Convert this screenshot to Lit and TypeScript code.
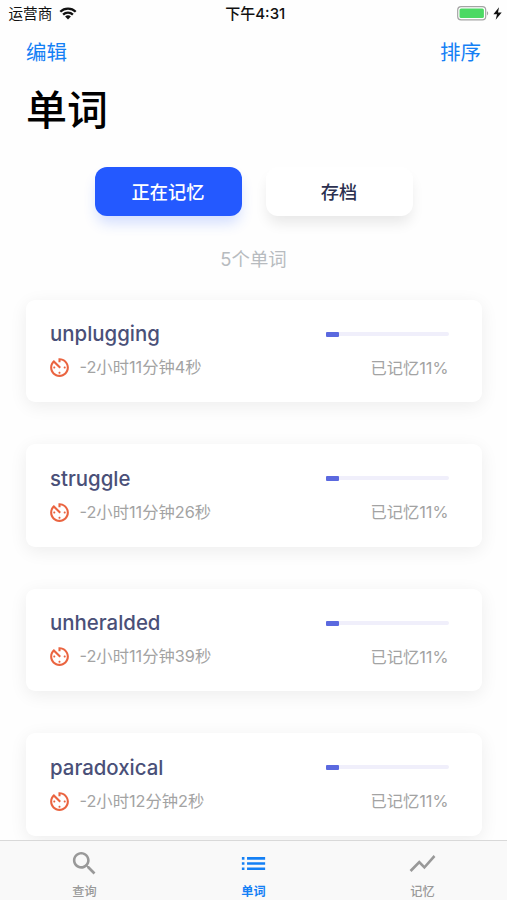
import { LitElement, html, css, svg } from "lit";
import { customElement, property } from "lit/decorators.js";
import { classMap } from "lit/directives/class-map.js";

interface Word {
  text: string;
  due: string;
  progress: number;
}

const WORDS: Word[] = [
  { text: "unplugging", due: "-2小时11分钟4秒", progress: 11 },
  { text: "struggle", due: "-2小时11分钟26秒", progress: 11 },
  { text: "unheralded", due: "-2小时11分钟39秒", progress: 11 },
  { text: "paradoxical", due: "-2小时12分钟2秒", progress: 11 },
];

const ICONS = {
  timer:
    "M11 17c0 .55.45 1 1 1s1-.45 1-1-.45-1-1-1-1 .45-1 1zm0-14v4h2V5.08c3.39.49 6 3.39 6 6.92 0 3.87-3.13 7-7 7s-7-3.13-7-7c0-1.68.59-3.22 1.58-4.42L12 13l1.41-1.41-6.8-6.8v.02C4.42 6.45 3 9.05 3 12c0 4.97 4.02 9 9 9 4.97 0 9-4.03 9-9s-4.03-9-9-9h-1zm7 9c0-.55-.45-1-1-1s-1 .45-1 1 .45 1 1 1 1-.45 1-1zM6 12c0 .55.45 1 1 1s1-.45 1-1-.45-1-1-1-1 .45-1 1z",
  search:
    "M15.5 14h-.79l-.28-.27C15.41 12.59 16 11.11 16 9.5 16 5.91 13.09 3 9.5 3S3 5.91 3 9.5 5.91 16 9.5 16c1.61 0 3.09-.59 4.23-1.57l.27.28v.79l5 4.99L20.49 19l-4.99-5zm-6 0C7.01 14 5 11.99 5 9.5S7.01 5 9.5 5 14 7.01 14 9.5 11.99 14 9.5 14z",
  list: "M3 13h2v-2H3v2zm0 4h2v-2H3v2zm0-8h2V7H3v2zm4 4h14v-2H7v2zm0 4h14v-2H7v2zM7 7v2h14V7H7z",
  chart: "M3.5 18.49l6-6.01 4 4L22 6.92l-1.41-1.41-7.09 7.97-4-4L2 16.99z",
};

const icon = (d: string) => html`<svg viewBox="0 0 24 24">${svg`<path d=${d} fill="currentColor"></path>`}</svg>`;

@customElement("status-bar")
class StatusBar extends LitElement {
  static styles = css`
    :host {
      display: grid;
      grid-template-columns: 1fr auto 1fr;
      align-items: center;
      height: 28px;
      padding: 0 5px 0 8.5px;
      color: #111;
      font-size: 14.6px;
      line-height: 28px;
    }
    .carrier, .power { display: flex; align-items: center; }
    .carrier { gap: 7px; }
    .carrier svg { margin-top: -2px; }
    .power { justify-content: flex-end; gap: 4px; margin-top: -2px; }
    .time { font-weight: 500; font-size: 15px; }
    svg { display: block; }
  `;
  render() {
    return html`
      <div class="carrier">
        <span>运营商</span>
        <svg width="18" height="13" viewBox="0 0 18 13" fill="none" stroke="#111" stroke-width="2.3">
          <path d="M1.3 4.7a11 11 0 0 1 15.4 0"></path>
          <path d="M4.1 7.6a7 7 0 0 1 9.8 0"></path>
          <path d="M9 12.6L6.1 9.6a4.2 4.2 0 0 1 5.8 0z" fill="#111" stroke="none"></path>
        </svg>
      </div>
      <span class="time">下午4:31</span>
      <div class="power">
        <svg width="32" height="15" viewBox="0 0 32 15">
          <rect x="0.7" y="0.7" width="28" height="13.2" rx="3.4" fill="#fff" stroke="#a4a4a4" stroke-width="1.2"></rect>
          <rect x="2.5" y="2.5" width="24.4" height="9.6" rx="1.6" fill="#4cd964"></rect>
          <path d="M30 5.2c1.6.6 1.6 3.6 0 4.2z" fill="#a4a4a4"></path>
        </svg>
        <svg width="9" height="13" viewBox="0 0 9 13"><path d="M6 .3L.4 7.3H4L2.7 12.7L8.7 5.5H5z" fill="#111"></path></svg>
      </div>
    `;
  }
}

@customElement("word-card")
class WordCard extends LitElement {
  @property({ attribute: false }) word!: Word;
  static styles = css`
    :host {
      box-sizing: border-box;
      display: flex;
      justify-content: space-between;
      height: 102.5px;
      padding: 20.5px 33.5px 0 24px;
      border-radius: 9px;
      background: #fff;
      box-shadow: 0 4px 18px rgba(0, 0, 0, 0.07);
    }
    .name {
      height: 28px;
      line-height: 28px;
      font-size: 20.4px;
      font-weight: 500;
      color: #4a5078;
    }
    .due { display: flex; align-items: center; gap: 7.5px; }
    .due, .ratio {
      height: 24px;
      margin-top: 7.5px;
      line-height: 25px;
      font-size: 16.3px;
      color: #a3a3a3;
      white-space: nowrap;
    }
    .due svg { width: 25px; height: 25px; margin-left: -3px; color: #ea6440; }
    .side { display: flex; flex-direction: column; width: 123px; text-align: right; }
    .track {
      height: 4px;
      margin: 11.5px 0 12.5px;
      border-radius: 2px;
      background: #f0effb;
    }
    .fill { height: 5px; border-radius: 1px; background: #5b69df; }
  `;
  render() {
    const { text, due, progress } = this.word;
    return html`
      <div>
        <div class="name">${text}</div>
        <div class="due">${icon(ICONS.timer)}<span>${due}</span></div>
      </div>
      <div class="side">
        <div class="track"><div class="fill" style="width:${progress}%"></div></div>
        <div class="ratio">已记忆${progress}%</div>
      </div>
    `;
  }
}

@customElement("tab-bar")
class TabBar extends LitElement {
  static styles = css`
    :host {
      box-sizing: border-box;
      position: relative;
      display: grid;
      grid-template-columns: repeat(3, 1fr);
      height: 60px;
      border-top: 1px solid #d9d9d9;
      background: #f9f9f9;
    }
    .tab {
      display: flex;
      flex-direction: column;
      align-items: center;
      padding-top: 6.5px;
      color: #999;
      font-size: 12.2px;
      font-weight: 500;
      line-height: 18px;
    }
    .tab.active { color: #1480f5; font-weight: 700; }
    svg { width: 31px; height: 31px; margin-bottom: 4px; }
  `;
  render() {
    const tabs = [
      { label: "查询", d: ICONS.search, active: false },
      { label: "单词", d: ICONS.list, active: true },
      { label: "记忆", d: ICONS.chart, active: false },
    ];
    return tabs.map(
      (t) => html`<div class=${classMap({ tab: true, active: t.active })}>${icon(t.d)}<span>${t.label}</span></div>`
    );
  }
}

@customElement("app-root")
class AppRoot extends LitElement {
  static styles = css`
    :host {
      display: flex;
      flex-direction: column;
      height: 900px;
      overflow: hidden;
      background: #fefefe;
      font-family: Inter, "Noto Sans CJK SC", sans-serif;
    }
    .nav {
      display: flex;
      justify-content: space-between;
      height: 48px;
      padding: 0 26px;
      line-height: 49px;
      font-size: 20.5px;
      color: #1480f5;
    }
    h1 {
      margin: 0;
      height: 64px;
      padding-left: 26px;
      line-height: 68px;
      font-size: 41px;
      font-weight: 500;
      color: #000;
    }
    .segments {
      display: flex;
      justify-content: center;
      gap: 24px;
      margin-top: 27px;
    }
    .segment {
      width: 147px;
      height: 49px;
      border-radius: 12px;
      background: #fff;
      color: #2c3150;
      text-align: center;
      font-size: 18.2px;
      font-weight: 500;
      line-height: 50px;
      box-shadow: 0 9px 14px -2px rgba(0, 0, 0, 0.09);
    }
    .segment.active {
      background: #2459ff;
      color: #fff;
      box-shadow: 0 9px 14px -2px rgba(36, 89, 255, 0.2);
    }
    .count {
      margin-top: 30px;
      height: 26px;
      line-height: 26px;
      text-align: center;
      font-size: 18.4px;
      color: #b7bbbf;
    }
    .list {
      display: flex;
      flex: 1;
      min-height: 0;
      flex-direction: column;
      gap: 42px;
      padding: 27.5px 25px 0 26px;
    }
    word-card { flex: none; }
    tab-bar { flex: none; }
  `;
  render() {
    return html`
      <status-bar></status-bar>
      <div class="nav"><span>编辑</span><span>排序</span></div>
      <h1>单词</h1>
      <div class="segments">
        <div class="segment active">正在记忆</div>
        <div class="segment">存档</div>
      </div>
      <div class="count">5个单词</div>
      <div class="list">${WORDS.map((w) => html`<word-card .word=${w}></word-card>`)}</div>
      <tab-bar></tab-bar>
    `;
  }
}
